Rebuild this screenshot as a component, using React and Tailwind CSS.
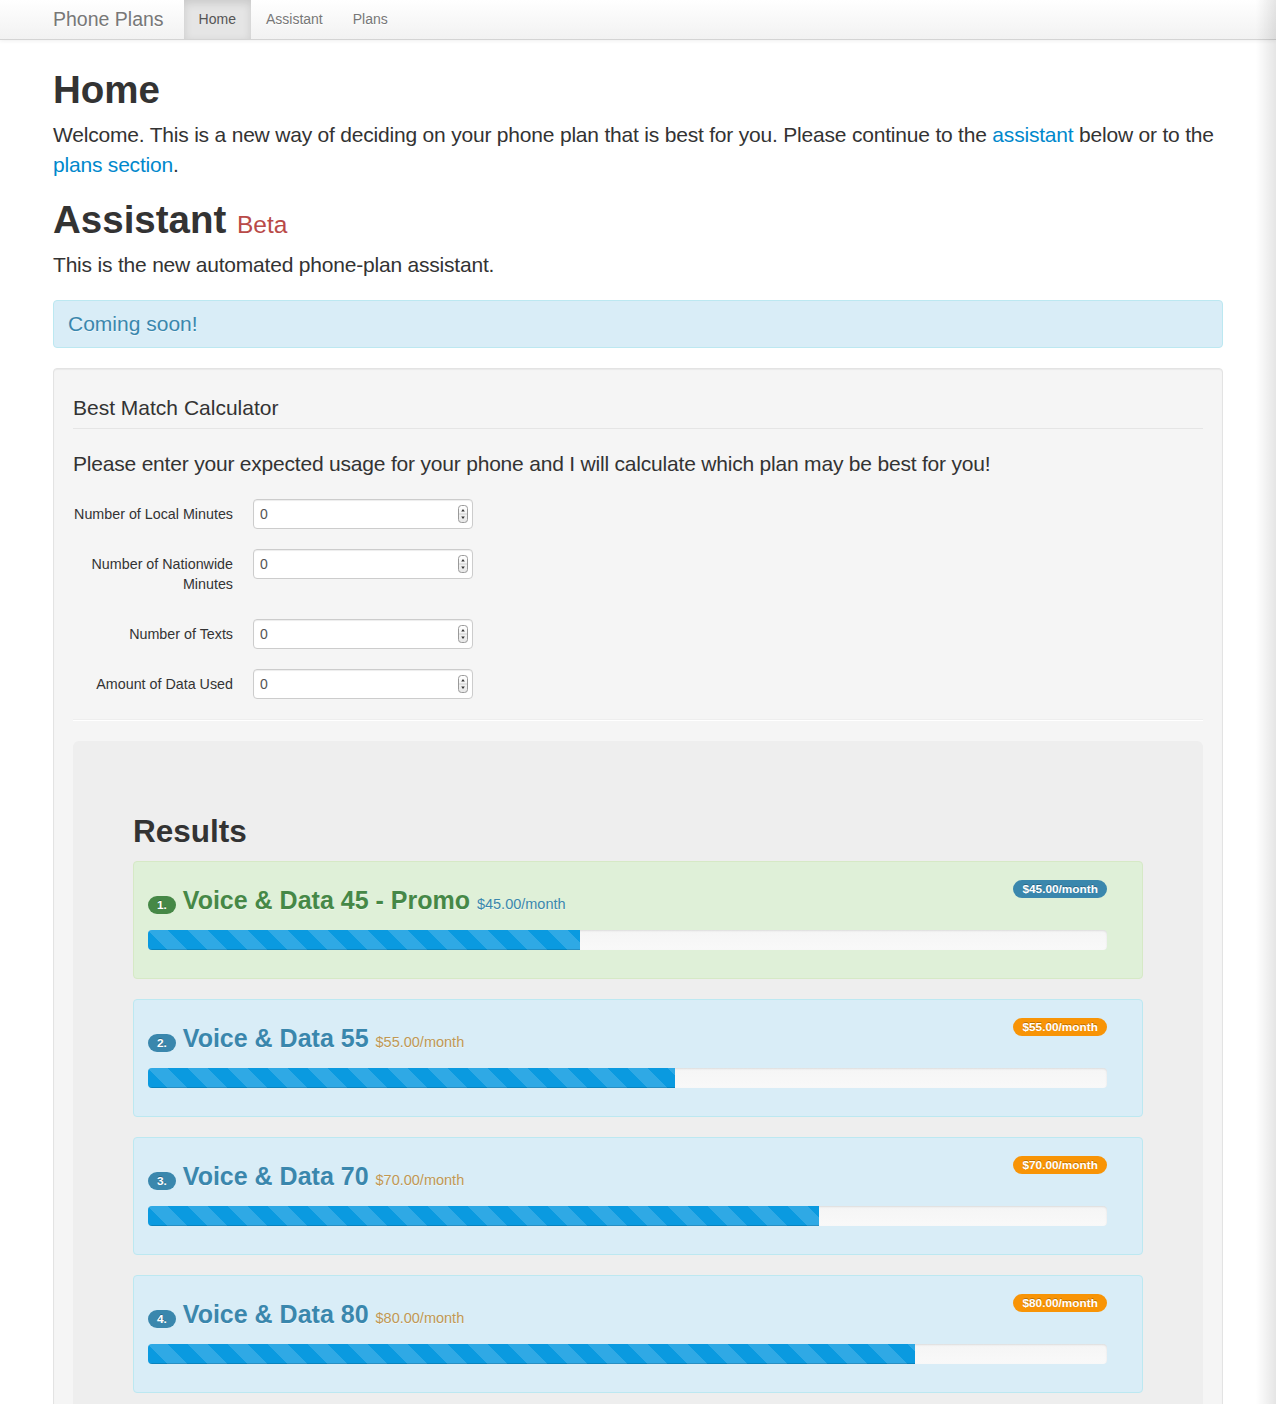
import React from "react";

const plans = [
  { n: "1.", name: "Voice & Data 45 - Promo", price: "$45.00/month", pct: 45, success: true },
  { n: "2.", name: "Voice & Data 55", price: "$55.00/month", pct: 55 },
  { n: "3.", name: "Voice & Data 70", price: "$70.00/month", pct: 70 },
  { n: "4.", name: "Voice & Data 80", price: "$80.00/month", pct: 80 },
];

const fields = [
  "Number of Local Minutes",
  "Number of Nationwide Minutes",
  "Number of Texts",
  "Amount of Data Used",
];

function Spinner() {
  return (
    <svg width="10" height="18" viewBox="0 0 10 18" className="absolute right-[4px] top-[5px]">
      <defs>
        <linearGradient id="spg" x1="0" y1="0" x2="0" y2="1">
          <stop offset="0" stopColor="#ffffff" />
          <stop offset="1" stopColor="#e6e6e6" />
        </linearGradient>
      </defs>
      <rect x="0.5" y="0.5" width="9" height="17" rx="3" fill="url(#spg)" stroke="#9a9a9a" />
      <line x1="1" y1="9" x2="9" y2="9" stroke="#d0d0d0" />
      <path d="M3.2 6.5 L5 4 L6.8 6.5 Z" fill="#333" />
      <path d="M3.2 11.5 L5 14 L6.8 11.5 Z" fill="#333" />
    </svg>
  );
}

export default function App() {
  return (
    <div className="relative min-h-screen overflow-hidden bg-white text-[#333] font-['Liberation_Sans',Arial,sans-serif]">
      <nav className="h-10 border-b border-[#d4d4d4] bg-linear-to-b from-white to-[#f2f2f2] shadow-[0_1px_4px_rgba(0,0,0,0.065)]">
        <div className="mx-auto flex h-full w-[1170px]">
          <a className="flex items-center pr-5 text-[19.5px] text-[#777] [text-shadow:0_1px_0_#fff]">Phone Plans</a>
          <ul className="flex h-full text-[14px]">
            <li className="flex h-full items-center bg-[#e5e5e5] px-[15px] text-[#555] shadow-[inset_0_3px_8px_rgba(0,0,0,0.125)]">Home</li>
            <li className="flex h-full items-center px-[15px] text-[#777] [text-shadow:0_1px_0_#fff]">Assistant</li>
            <li className="flex h-full items-center px-[15px] text-[#777] [text-shadow:0_1px_0_#fff]">Plans</li>
          </ul>
        </div>
      </nav>

      <main className="mx-auto w-[1170px] pt-[30px] pb-10">
        <h1 className="text-[38.5px] font-bold leading-10">Home</h1>
        <p className="mt-[10px] text-[21px] leading-[30px] tracking-[-0.2px]">
          Welcome. This is a new way of deciding on your phone plan that is best for you. Please continue to the{" "}
          <a className="text-[#0088cc]">assistant</a> below or to the{" "}
          <br />
          <a className="text-[#0088cc]">plans section</a>.
        </p>

        <h1 className="mt-5 h-10 text-[38.5px] font-bold leading-10">
          Assistant <small className="text-[24.5px] font-normal leading-none text-[#b94a48]">Beta</small>
        </h1>
        <p className="mt-[10px] text-[21px] leading-[30px] tracking-[-0.2px]">This is the new automated phone-plan assistant.</p>

        <div className="mt-5 rounded border border-[#bce8f1] bg-[#d9edf7] px-[14px] py-2 text-[21px] leading-[30px] text-[#3a87ad] [text-shadow:0_1px_0_rgba(255,255,255,0.5)]">
          Coming soon!
        </div>

        <div className="mt-5 rounded border border-[#e3e3e3] bg-[#f5f5f5] p-[19px] shadow-[inset_0_1px_1px_rgba(0,0,0,0.05)]">
          <div className="border-b border-[#e5e5e5] text-[21px] leading-10">Best Match Calculator</div>
          <p className="mt-5 text-[21px] leading-[30px] tracking-[-0.2px]">
            Please enter your expected usage for your phone and I will calculate which plan may be best for you!
          </p>

          <div className="mt-5 flex flex-col gap-5">
            {fields.map((f) => (
              <div key={f} className="flex items-start">
                <label className="w-[160px] py-[5px] text-right text-[14.3px] leading-5">{f}</label>
                <div className="relative ml-5 h-[30px] w-[220px] rounded border border-[#ccc] bg-white shadow-[inset_0_1px_1px_rgba(0,0,0,0.075)]">
                  <input
                    readOnly
                    value="0"
                    className="h-full w-full bg-transparent px-[6px] text-[14px] text-[#555] outline-none"
                  />
                  <Spinner />
                </div>
              </div>
            ))}
          </div>

          <div className="mt-5 h-[2px] border-t border-b border-t-[#eeeeee] border-b-white" />

          <div className="mt-5 rounded-md bg-[#eeeeee] p-[60px]">
            <h2 className="mt-[10px] text-[31.5px] font-bold leading-10">Results</h2>
            <div className="mt-[10px] flex flex-col gap-5">
              {plans.map((p) => (
                <div
                  key={p.n}
                  className={
                    p.success
                      ? "rounded border border-[#d6e9c6] bg-[#dff0d8] py-2 pl-[14px] pr-[35px]"
                      : "rounded border border-[#bce8f1] bg-[#d9edf7] py-2 pl-[14px] pr-[35px]"
                  }
                >
                  <div className="mt-[10px] flex h-10 items-start justify-between">
                    <h3
                      className={
                        p.success
                          ? "h-10 text-[25px] font-bold leading-10 text-[#468847] [text-shadow:0_1px_0_rgba(255,255,255,0.5)]"
                          : "h-10 text-[25px] font-bold leading-10 text-[#3a87ad] [text-shadow:0_1px_0_rgba(255,255,255,0.5)]"
                      }
                    >
                      <span
                        className={
                          p.success
                            ? "inline-block rounded-[9px] bg-[#468847] px-[9px] py-[2px] align-baseline text-[11.844px] font-bold leading-[14px] text-white [text-shadow:0_-1px_0_rgba(0,0,0,0.25)]"
                            : "inline-block rounded-[9px] bg-[#3a87ad] px-[9px] py-[2px] align-baseline text-[11.844px] font-bold leading-[14px] text-white [text-shadow:0_-1px_0_rgba(0,0,0,0.25)]"
                        }
                      >
                        {p.n}
                      </span>{" "}
                      {p.name}{" "}
                      <small
                        className={
                          p.success
                            ? "text-[14.5px] font-normal text-[#3a87ad]"
                            : "text-[14.5px] font-normal text-[#c09853]"
                        }
                      >
                        {p.price}
                      </small>
                    </h3>
                    <span
                      className={
                        p.success
                          ? "rounded-[9px] bg-[#3a87ad] px-[9px] py-[2px] text-[11.844px] font-bold leading-[14px] text-white [text-shadow:0_-1px_0_rgba(0,0,0,0.25)]"
                          : "rounded-[9px] bg-[#f89406] px-[9px] py-[2px] text-[11.844px] font-bold leading-[14px] text-white [text-shadow:0_-1px_0_rgba(0,0,0,0.25)]"
                      }
                    >
                      {p.price}
                    </span>
                  </div>
                  <div className="mt-[10px] mb-5 h-5 overflow-hidden rounded bg-linear-to-b from-[#f5f5f5] to-[#f9f9f9] shadow-[inset_0_1px_2px_rgba(0,0,0,0.1)]">
                    <div
                      className="h-full bg-[#0a9ae0] bg-[linear-gradient(45deg,rgba(255,255,255,0.15)_25%,transparent_25%,transparent_50%,rgba(255,255,255,0.15)_50%,rgba(255,255,255,0.15)_75%,transparent_75%,transparent)] bg-[length:40px_40px] shadow-[inset_0_-1px_0_rgba(0,0,0,0.15)]"
                      style={{ width: p.pct + "%" }}
                    />
                  </div>
                </div>
              ))}
            </div>
          </div>
        </div>
      </main>

      <div className="pointer-events-none absolute top-0 right-0 bottom-0 w-[20px] bg-linear-to-r from-transparent to-[rgba(0,0,0,0.1)]" />
    </div>
  );
}
